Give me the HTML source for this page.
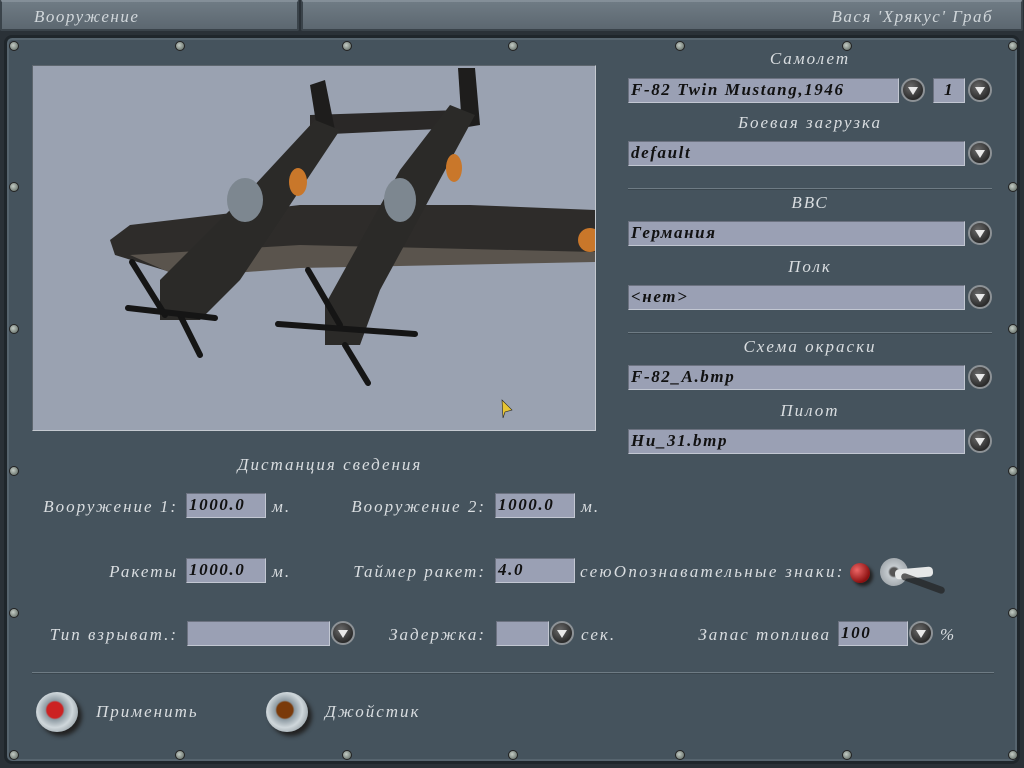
<!DOCTYPE html>
<html><head><meta charset="utf-8"><style>
*{margin:0;padding:0;box-sizing:border-box}
body{width:1024px;height:768px;background:#2a3137;position:relative;overflow:hidden;font-family:"Liberation Serif","DejaVu Serif",serif}
.a{position:absolute}
.tab{position:absolute;top:0;height:31px;background:linear-gradient(#6f7b84,#5c6770);border:2px solid #3a434a;border-top-color:#848f98;border-radius:2px}
.tab span{position:absolute;top:5px;font-style:italic;color:#d0d6da;font-size:17px;letter-spacing:1.5px}
.panel{position:absolute;left:4px;top:35px;width:1016px;height:729px;background:#45535d;border:3px solid #1f262b;border-radius:8px;box-shadow:inset 0 0 0 2px #56646e}
.lbl{position:absolute;font-style:italic;color:#d9dde0;font-size:17px;letter-spacing:2px;white-space:nowrap}
.c{text-align:center;width:360px;left:630px}
.r{text-align:right}
.f{position:absolute;height:25px;background:#9aa0b4;border:1px solid #c2c7d2;border-top-color:#6c7280;border-left-color:#6c7280;color:#111;font-style:italic;font-weight:bold;font-size:17px;letter-spacing:1.6px;padding:1px 2px;white-space:nowrap;overflow:hidden}
.d{position:absolute;width:24px;height:24px;border-radius:50%;background:radial-gradient(circle at 40% 35%,#6b6b6b,#2b2b2b 70%);border:2px solid #8d9296}
.d::after{content:"";position:absolute;left:5px;top:7px;border-left:5px solid transparent;border-right:5px solid transparent;border-top:8px solid #e8e8e8}
.sep{position:absolute;height:2px;background:#6e7b84;border-bottom:1px solid #3a464e}
.sc{position:absolute;width:10px;height:10px;border-radius:50%;background:radial-gradient(circle at 40% 40%,#c3cbc4,#55605a);border:1px solid #222}
</style></head><body>
<div class="tab" style="left:0;width:299px"><span style="left:32px">Вооружение</span></div>
<div class="tab" style="left:301px;width:722px"><span style="right:28px">Вася 'Хрякус' Граб</span></div>
<div class="panel"></div>
<div class="sc" style="left:9px;top:41px"></div><div class="sc" style="left:175px;top:41px"></div><div class="sc" style="left:342px;top:41px"></div><div class="sc" style="left:508px;top:41px"></div><div class="sc" style="left:675px;top:41px"></div><div class="sc" style="left:842px;top:41px"></div><div class="sc" style="left:1008px;top:41px"></div>
<div class="sc" style="left:9px;top:182px"></div><div class="sc" style="left:9px;top:324px"></div><div class="sc" style="left:9px;top:466px"></div><div class="sc" style="left:9px;top:608px"></div><div class="sc" style="left:9px;top:750px"></div>
<div class="sc" style="left:1008px;top:182px"></div><div class="sc" style="left:1008px;top:324px"></div><div class="sc" style="left:1008px;top:466px"></div><div class="sc" style="left:1008px;top:608px"></div><div class="sc" style="left:1008px;top:750px"></div>
<div class="sc" style="left:175px;top:750px"></div><div class="sc" style="left:342px;top:750px"></div><div class="sc" style="left:508px;top:750px"></div><div class="sc" style="left:675px;top:750px"></div><div class="sc" style="left:842px;top:750px"></div>

<div class="a" style="left:32px;top:65px;width:564px;height:366px;background:#9aa2b1;border:1px solid #c4c9d0;border-top-color:#5d666e;border-left-color:#5d666e;overflow:hidden">
<svg width="564" height="366" viewBox="33 66 564 366">
<polygon points="110,240 130,225 300,205 470,205 595,210 595,262 470,262 300,265 180,275 115,255" fill="#2e2c2a"/>
<polygon points="130,255 300,245 595,252 595,262 300,268 180,277" fill="#5a544d"/>
<polygon points="310,115 460,110 460,128 310,135" fill="#2a2827"/>
<polygon points="310,85 325,80 335,130 318,135" fill="#1e1d1c"/>
<polygon points="458,68 475,68 480,125 462,128" fill="#1e1d1c"/>
<polygon points="315,120 340,130 240,280 200,320 160,320 160,280 250,190" fill="#2b2a28"/>
<polygon points="450,105 475,115 380,290 360,345 325,345 325,305 400,170" fill="#2b2a28"/>
<ellipse cx="298" cy="182" rx="9" ry="14" fill="#c9772a"/>
<ellipse cx="454" cy="168" rx="8" ry="14" fill="#c9772a"/>
<circle cx="590" cy="240" r="12" fill="#c9772a"/>
<ellipse cx="245" cy="200" rx="18" ry="22" fill="#7d8790"/>
<ellipse cx="400" cy="200" rx="16" ry="22" fill="#7d8790"/>
<g stroke="#151515" stroke-width="6" stroke-linecap="round"><line x1="132" y1="262" x2="165" y2="315"/><line x1="180" y1="315" x2="200" y2="355"/><line x1="128" y1="308" x2="215" y2="318"/><line x1="308" y1="270" x2="340" y2="325"/><line x1="345" y1="345" x2="368" y2="383"/><line x1="278" y1="324" x2="415" y2="334"/></g>
<polygon points="502,400 512,410 505,412 503,418" fill="#e7c433" stroke="#222" stroke-width="0.6"/>
</svg></div>

<div class="lbl c" style="top:49px">Самолет</div>
<div class="f" style="left:628px;top:78px;width:271px">F-82 Twin Mustang,1946</div><div class="d" style="left:901px;top:78px"></div>
<div class="f" style="left:933px;top:78px;width:32px;text-align:center">1</div><div class="d" style="left:968px;top:78px"></div>
<div class="lbl c" style="top:113px">Боевая загрузка</div>
<div class="f" style="left:628px;top:141px;width:337px">default</div><div class="d" style="left:968px;top:141px"></div>
<div class="sep" style="left:628px;top:188px;width:364px"></div>
<div class="lbl c" style="top:193px">ВВС</div>
<div class="f" style="left:628px;top:221px;width:337px">Германия</div><div class="d" style="left:968px;top:221px"></div>
<div class="lbl c" style="top:257px">Полк</div>
<div class="f" style="left:628px;top:285px;width:337px">&lt;нет&gt;</div><div class="d" style="left:968px;top:285px"></div>
<div class="sep" style="left:628px;top:332px;width:364px"></div>
<div class="lbl c" style="top:337px">Схема окраски</div>
<div class="f" style="left:628px;top:365px;width:337px">F-82_A.bmp</div><div class="d" style="left:968px;top:365px"></div>
<div class="lbl c" style="top:401px">Пилот</div>
<div class="f" style="left:628px;top:429px;width:337px">Hu_31.bmp</div><div class="d" style="left:968px;top:429px"></div>

<div class="lbl" style="left:150px;top:455px;width:360px;text-align:center">Дистанция сведения</div>
<div class="lbl r" style="right:846px;top:497px">Вооружение 1:</div>
<div class="f" style="left:186px;top:493px;width:80px">1000.0</div><div class="lbl" style="left:272px;top:497px">м.</div>
<div class="lbl r" style="right:538px;top:497px">Вооружение 2:</div>
<div class="f" style="left:495px;top:493px;width:80px">1000.0</div><div class="lbl" style="left:581px;top:497px">м.</div>
<div class="lbl r" style="right:846px;top:562px">Ракеты</div>
<div class="f" style="left:186px;top:558px;width:80px">1000.0</div><div class="lbl" style="left:272px;top:562px">м.</div>
<div class="lbl r" style="right:538px;top:562px">Таймер ракет:</div>
<div class="f" style="left:495px;top:558px;width:80px">4.0</div><div class="lbl" style="left:580px;top:562px;letter-spacing:2.3px">сеюОпознавательные знаки:</div>
<div class="a" style="left:850px;top:563px;width:20px;height:20px;border-radius:50%;background:radial-gradient(circle at 35% 35%,#e66,#8a1010 70%);box-shadow:3px 3px 3px #222"></div>
<div class="a" style="left:880px;top:558px;width:28px;height:28px;border-radius:50%;background:radial-gradient(#555 20%,#c5cbcf 30%,#8c9398);"></div>
<div class="a" style="left:895px;top:568px;width:38px;height:10px;background:#e6e8e8;border-radius:4px;transform:rotate(-5deg)"></div>
<div class="a" style="left:900px;top:580px;width:46px;height:7px;background:#222;border-radius:4px;transform:rotate(20deg);opacity:.7"></div>

<div class="lbl r" style="right:846px;top:625px">Тип взрыват.:</div>
<div class="f" style="left:187px;top:621px;width:143px"></div><div class="d" style="left:331px;top:621px"></div>
<div class="lbl r" style="right:538px;top:625px">Задержка:</div>
<div class="f" style="left:496px;top:621px;width:53px"></div><div class="d" style="left:550px;top:621px"></div><div class="lbl" style="left:581px;top:625px">сек.</div>
<div class="lbl r" style="right:193px;top:625px">Запас топлива</div>
<div class="f" style="left:838px;top:621px;width:70px">100</div><div class="d" style="left:909px;top:621px"></div><div class="lbl" style="left:940px;top:625px">%</div>

<div class="sep" style="left:32px;top:672px;width:962px"></div>
<div class="a" style="left:36px;top:692px;width:42px;height:40px;border-radius:50%;background:radial-gradient(circle at 45% 45%,#c22 25%,#8d9aa2 30%,#cfd7db 55%,#6b777e);box-shadow:4px 4px 4px #222"></div>
<div class="lbl" style="left:96px;top:702px">Применить</div>
<div class="a" style="left:266px;top:692px;width:42px;height:40px;border-radius:50%;background:radial-gradient(circle at 45% 45%,#7a3a0a 25%,#8d9aa2 30%,#cfd7db 55%,#6b777e);box-shadow:4px 4px 4px #222"></div>
<div class="lbl" style="left:325px;top:702px">Джойстик</div>
</body></html>
